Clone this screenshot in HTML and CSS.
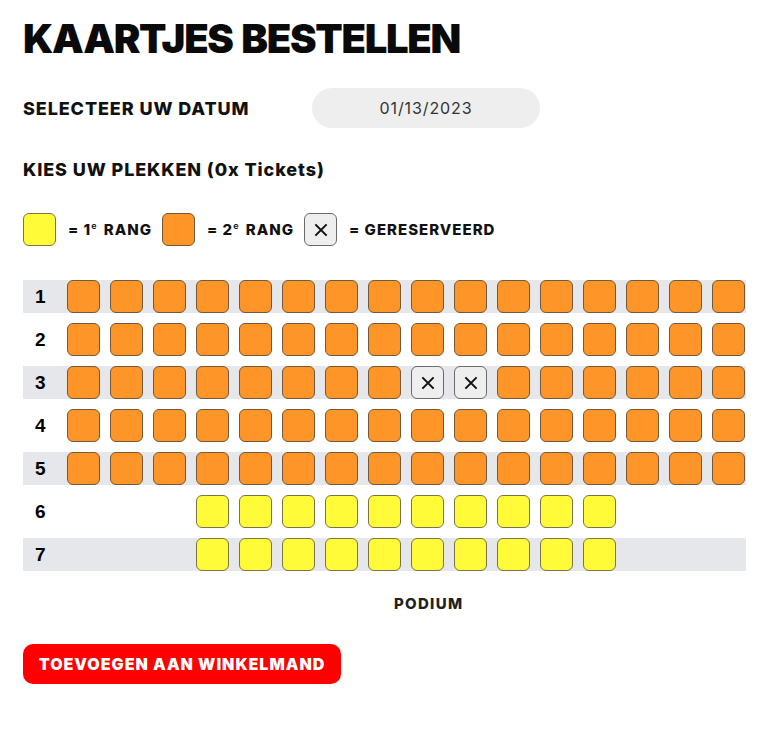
FILE: index.html
```html
<!DOCTYPE html>
<html lang="nl">
<head>
<meta charset="utf-8">
<title>Kaartjes bestellen</title>
<link rel="stylesheet" href="styles.css">
</head>
<body>
<main class="page">
  <h1 class="title">KAARTJES BESTELLEN</h1>

  <div class="date-row">
    <span class="label">SELECTEER UW DATUM</span>
    <div class="date-input">01/13/2023</div>
  </div>

  <h2 class="label pick">KIES UW PLEKKEN (0x Tickets)</h2>

  <div class="legend">
    <span class="seat first"></span><span class="legend-text">= 1<sup>e</sup> RANG</span>
    <span class="seat second"></span><span class="legend-text">= 2<sup>e</sup> RANG</span>
    <span class="seat reserved"><svg viewBox="0 0 16 16" class="x"><path d="M3 3L13 13M13 3L3 13"/></svg></span><span class="legend-text">= GERESERVEERD</span>
  </div>

  <div class="hall">
    <div class="row alt"><span class="num">1</span><div class="seats">
      <span class="seat second"></span><span class="seat second"></span><span class="seat second"></span><span class="seat second"></span><span class="seat second"></span><span class="seat second"></span><span class="seat second"></span><span class="seat second"></span><span class="seat second"></span><span class="seat second"></span><span class="seat second"></span><span class="seat second"></span><span class="seat second"></span><span class="seat second"></span><span class="seat second"></span><span class="seat second"></span>
    </div></div>
    <div class="row"><span class="num">2</span><div class="seats">
      <span class="seat second"></span><span class="seat second"></span><span class="seat second"></span><span class="seat second"></span><span class="seat second"></span><span class="seat second"></span><span class="seat second"></span><span class="seat second"></span><span class="seat second"></span><span class="seat second"></span><span class="seat second"></span><span class="seat second"></span><span class="seat second"></span><span class="seat second"></span><span class="seat second"></span><span class="seat second"></span>
    </div></div>
    <div class="row alt"><span class="num">3</span><div class="seats">
      <span class="seat second"></span><span class="seat second"></span><span class="seat second"></span><span class="seat second"></span><span class="seat second"></span><span class="seat second"></span><span class="seat second"></span><span class="seat second"></span><span class="seat reserved"><svg viewBox="0 0 16 16" class="x"><path d="M3 3L13 13M13 3L3 13"/></svg></span><span class="seat reserved"><svg viewBox="0 0 16 16" class="x"><path d="M3 3L13 13M13 3L3 13"/></svg></span><span class="seat second"></span><span class="seat second"></span><span class="seat second"></span><span class="seat second"></span><span class="seat second"></span><span class="seat second"></span>
    </div></div>
    <div class="row"><span class="num">4</span><div class="seats">
      <span class="seat second"></span><span class="seat second"></span><span class="seat second"></span><span class="seat second"></span><span class="seat second"></span><span class="seat second"></span><span class="seat second"></span><span class="seat second"></span><span class="seat second"></span><span class="seat second"></span><span class="seat second"></span><span class="seat second"></span><span class="seat second"></span><span class="seat second"></span><span class="seat second"></span><span class="seat second"></span>
    </div></div>
    <div class="row alt"><span class="num">5</span><div class="seats">
      <span class="seat second"></span><span class="seat second"></span><span class="seat second"></span><span class="seat second"></span><span class="seat second"></span><span class="seat second"></span><span class="seat second"></span><span class="seat second"></span><span class="seat second"></span><span class="seat second"></span><span class="seat second"></span><span class="seat second"></span><span class="seat second"></span><span class="seat second"></span><span class="seat second"></span><span class="seat second"></span>
    </div></div>
    <div class="row"><span class="num">6</span><div class="seats centered">
      <span class="seat first"></span><span class="seat first"></span><span class="seat first"></span><span class="seat first"></span><span class="seat first"></span><span class="seat first"></span><span class="seat first"></span><span class="seat first"></span><span class="seat first"></span><span class="seat first"></span>
    </div></div>
    <div class="row alt"><span class="num">7</span><div class="seats centered">
      <span class="seat first"></span><span class="seat first"></span><span class="seat first"></span><span class="seat first"></span><span class="seat first"></span><span class="seat first"></span><span class="seat first"></span><span class="seat first"></span><span class="seat first"></span><span class="seat first"></span>
    </div></div>
  </div>

  <div class="podium">PODIUM</div>

  <button class="cart-btn" type="button">TOEVOEGEN AAN WINKELMAND</button>
</main>
</body>
</html>
```

FILE: styles.css
```css
* { box-sizing: border-box; }

body {
  margin: 0;
  background: #ffffff;
  color: #111111;
  font-family: "Inter", "Liberation Sans", sans-serif;
}

.page {
  padding: 14px 23px 40px;
}

.title {
  margin: 0;
  font-size: 40px;
  font-weight: 900;
  letter-spacing: -1.3px;
  word-spacing: 2px;
  line-height: 50px;
  color: #0a0a0a;
}

.label {
  font-size: 18px;
  font-weight: 800;
  margin: 0;
  color: #111;
  letter-spacing: 0.9px;
}

.date-row {
  display: flex;
  align-items: center;
  margin-top: 24px;
}

.date-row .label {
  width: 289px;
}

.date-input {
  width: 228px;
  height: 40px;
  border-radius: 20px;
  background: #eeeeee;
  display: flex;
  align-items: center;
  justify-content: center;
  font-size: 16px;
  font-weight: 400;
  letter-spacing: 0.9px;
  color: #333;
}

.pick {
  margin-top: 31px;
}

.legend {
  display: flex;
  align-items: center;
  margin-top: 33px;
}

.legend-text {
  font-size: 15px;
  font-weight: 800;
  letter-spacing: 1px;
  margin: 0 10px 0 12px;
}

.legend-text sup {
  font-size: 9px;
  font-weight: 600;
  vertical-align: 6px;
  line-height: 0;
  letter-spacing: 0;
  margin-right: 3px;
}

.seat {
  width: 33px;
  height: 33px;
  border-radius: 6px;
  border: 1.5px solid #6f604b;
  flex: none;
  display: flex;
  align-items: center;
  justify-content: center;
}

.seat.first { background: #fffb38; border-color: #7a7447; }
.seat.second { background: #fd9528; border-color: #73583a; }
.seat.reserved { background: #eeeeee; border-color: #6a6a6a; }

.x {
  width: 18px;
  height: 18px;
}
.x path {
  stroke: #111;
  stroke-width: 1.8;
  fill: none;
}

.hall {
  margin-top: 34px;
  width: 723px;
}

.row {
  display: flex;
  align-items: center;
  height: 33px;
  margin-bottom: 10px;
}

.row.alt { background: #e6e7eb; }

.num {
  width: 44px;
  padding-left: 12px;
  font-family: "Liberation Sans", Arial, sans-serif;
  font-weight: 700;
  font-size: 19px;
  color: #000;
}

.seats {
  display: flex;
  gap: 10px;
  width: 678px;
}

.seats.centered { justify-content: center; }

.podium {
  margin-top: 23px;
  padding-left: 371px;
  font-size: 15px;
  font-weight: 800;
  letter-spacing: 1.3px;
  color: #222;
}

.cart-btn {
  margin-top: 31px;
  width: 318px;
  height: 40px;
  border: none;
  border-radius: 10px;
  background: #ff0000;
  color: #fff;
  font-family: "Inter", "Liberation Sans", sans-serif;
  font-size: 16px;
  font-weight: 900;
  letter-spacing: 1px;
  cursor: pointer;
}
```
